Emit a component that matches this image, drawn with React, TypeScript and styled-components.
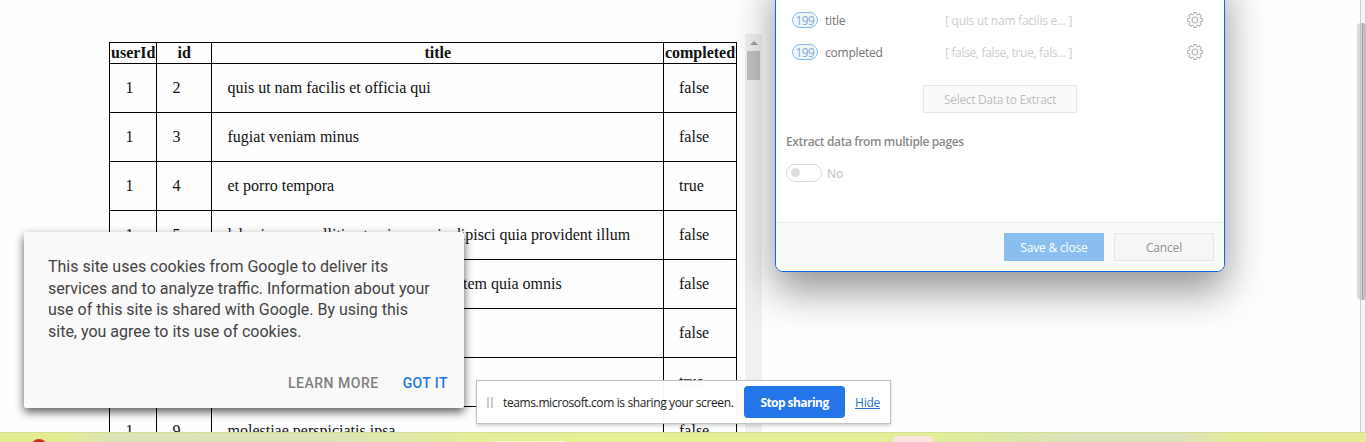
import React from 'react';
import styled, { createGlobalStyle } from 'styled-components';

const Global = createGlobalStyle`
  * { box-sizing: border-box; }
  body { margin: 0; background: #fefefe; overflow: hidden; }
`;

const ui = `'Open Sans', 'Noto Sans', sans-serif`;

const Page = styled.div`
  position: relative;
  width: 1366px;
  height: 442px;
  display: flex;
  flex-direction: column;
  overflow: hidden;
`;

const Content = styled.main`
  height: 432px;
  display: flex;
  overflow: hidden;
`;

const Table = styled.div`
  margin: 42px 8px 0 109px;
  width: 628px;
  flex: none;
  border-right: 1px solid #000;
  font: 16px 'Liberation Serif', serif;
  color: #111;
`;

const Row = styled.div<{ $head?: boolean }>`
  display: grid;
  grid-template-columns: 47px 55px 452px 73px;
  height: ${(p) => (p.$head ? 21 : 49)}px;
  font-weight: ${(p) => (p.$head ? 700 : 400)};
`;

const Cell = styled.div<{ $head?: boolean }>`
  display: flex;
  align-items: center;
  justify-content: ${(p) => (p.$head ? 'center' : 'flex-start')};
  padding-left: ${(p) => (p.$head ? 0.5 : 15.5)}px;
  border: solid #000;
  border-width: 1px 0 0 1px;
  white-space: nowrap;

  &:last-child {
    padding-left: ${(p) => (p.$head ? 0 : 15)}px;
  }
`;

const TableScroll = styled.div`
  margin-top: 34px;
  width: 17px;
  flex: none;
  background: #f0f0f0;
  display: flex;
  flex-direction: column;
  align-items: center;
  padding-top: 7px;
`;

const TableThumb = styled.div`
  margin-top: 6px;
  width: 13px;
  height: 29px;
  background: #c1c1c1;
`;

const PageScroll = styled.div`
  position: relative;
  margin-left: auto;
  width: 6px;
  background: #f5f5f5;
  border: solid #d0d0d0;
  border-width: 0 1px;
`;

const PageThumb = styled.div`
  position: absolute;
  top: 23px;
  left: -4px;
  width: 9px;
  height: 277px;
  border-radius: 4px;
  background: linear-gradient(90deg, #dbdbdb 0 3px, #c6c6c6 3px 4px, #d2d2d2 4px 5px, #a6a6a6 5px 6px, #c0c0c0 6px);
`;

const Dialog = styled.section`
  position: absolute;
  left: 775px;
  top: -30px;
  width: 450px;
  height: 302px;
  border: 1px solid #0a6cd8;
  border-radius: 8px;
  background: #fff;
  box-shadow: 0 18px 42px rgba(0, 0, 0, 0.43);
  font: 12px ${ui};
  display: flex;
  flex-direction: column;
  overflow: hidden;
`;

const DialogBody = styled.div`
  flex: 1;
  padding: 33px 21px 0 10px;
`;

const Field = styled.div`
  display: flex;
  align-items: center;
  height: 32px;
  padding-left: 6px;
`;

const Count = styled.span`
  width: 26px;
  height: 16px;
  border: 1px solid #83b9ea;
  border-radius: 8px;
  background: #f0f6fc;
  color: #85a9d0;
  display: flex;
  align-items: center;
  justify-content: center;
  font-size: 12px;
  letter-spacing: -0.6px;
`;

const FieldName = styled.span`
  margin-left: 7px;
  width: 120px;
  color: #757575;
  padding-top: 1px;
  letter-spacing: -0.2px;
`;

const Preview = styled.span<{ $spacing: number }>`
  color: #cdcdcd;
  padding-top: 1px;
  white-space: pre;
  letter-spacing: ${(p) => p.$spacing}px;
`;

const GearIcon = styled.svg`
  margin-left: auto;
  width: 16px;
  height: 16px;
`;

const Button = styled.div<{ $kind: 'select' | 'save' | 'cancel' }>`
  display: flex;
  align-items: center;
  justify-content: center;
  height: 28px;
  width: ${(p) => (p.$kind === 'select' ? 154 : 100)}px;
  border: 1px solid ${(p) => (p.$kind === 'save' ? '#8abeee' : '#e6e6e6')};
  background: ${(p) => ({ select: '#fafafa', save: '#8abeee', cancel: '#f6f6f6' })[p.$kind]};
  color: ${(p) => ({ select: '#bdbdbd', save: '#fff', cancel: '#8f8f8f' })[p.$kind]};
  margin: ${(p) => (p.$kind === 'select' ? '17px 0 0 137px' : '0')};
  padding-top: 1px;
  letter-spacing: ${(p) => (p.$kind === 'select' ? -0.33 : -0.18)}px;
`;

const Subhead = styled.div`
  margin-top: 21px;
  line-height: 16px;
  font-weight: 600;
  color: #8a8a8a;
  letter-spacing: -0.38px;
`;

const ToggleRow = styled.div`
  display: flex;
  align-items: center;
  gap: 5px;
  margin-top: 14px;
  height: 18px;
  color: #bdbdbd;
`;

const Toggle = styled.div`
  width: 36px;
  height: 18px;
  border: 1px solid #dadada;
  border-radius: 9px;
  padding: 3px 4px;

  &::before {
    content: '';
    display: block;
    width: 9px;
    height: 9px;
    border-radius: 50%;
    background: #dcdedd;
  }
`;

const DialogFooter = styled.div`
  height: 49px;
  border-top: 1px solid #eee;
  background: #fafafa;
  display: flex;
  justify-content: flex-end;
  gap: 10px;
  padding: 10px 10px 0 0;
`;

const CookieCard = styled.section`
  position: absolute;
  left: 24px;
  top: 232px;
  width: 440px;
  height: 176px;
  border-radius: 2px;
  background: #fafafa;
  box-shadow: 0 4px 10px rgba(0, 0, 0, 0.65);
  font-family: Roboto, sans-serif;
  padding: 24px 16px 0 24px;
  display: flex;
  flex-direction: column;
`;

const CookieText = styled.p`
  margin: 0;
  font-size: 16px;
  line-height: 21.67px;
  color: #444;
  white-space: nowrap;
`;

const CookieActions = styled.div`
  display: flex;
  justify-content: flex-end;
  gap: 24px;
  margin-top: 32px;
  font-size: 14px;
  line-height: 16px;
  font-weight: 500;
`;

const CookieAction = styled.span<{ $primary?: boolean }>`
  color: ${(p) => (p.$primary ? '#1a78dc' : '#808080')};
  letter-spacing: ${(p) => (p.$primary ? 0.42 : 0.5)}px;
`;

const ShareBar = styled.section`
  position: absolute;
  left: 476px;
  top: 380px;
  width: 415px;
  height: 44px;
  border: 1px solid #bfc2c2;
  background: rgba(255, 255, 255, 0.96);
  box-shadow: 0 2px 3px rgba(0, 0, 0, 0.16);
  display: flex;
  align-items: center;
  font: 12px ${ui};
  color: #222;
  white-space: nowrap;
`;

const Grip = styled.div`
  width: 6px;
  height: 11px;
  margin: 0 10px;
  border: solid #ccc;
  border-width: 0 2px;
`;

const ShareText = styled.span`
  width: 241px;
  letter-spacing: -0.38px;
`;

const StopButton = styled.div`
  width: 101px;
  height: 32px;
  border-radius: 4px;
  background: #2476e8;
  color: #fff;
  font-weight: 700;
  letter-spacing: -0.55px;
  display: flex;
  align-items: center;
  justify-content: center;
`;

const HideLink = styled.a`
  margin-left: 10px;
  color: #2a70dc;
  text-decoration: underline;
  letter-spacing: -0.2px;
`;

const Taskbar = styled.footer`
  position: relative;
  height: 10px;
  overflow: hidden;
  border-top: 1px solid #d6de95;
  background: linear-gradient(90deg, #e4ec90 0, #e4ec92 60px, #dce3b8 115px, #dce4b6 330px, #e4ee98 480px, #e6f096 600px, #e4ee98 930px, #dae8a8 1010px, #dce2bc 1090px, #dde2ba 1180px, #e5ec96 1240px, #e7ea94);
`;

const TaskItem = styled.div<{ $x: number; $y: number; $w: number; $color: string; $round: string }>`
  position: absolute;
  left: ${(p) => p.$x}px;
  top: ${(p) => p.$y}px;
  width: ${(p) => p.$w}px;
  height: 16px;
  border-radius: ${(p) => p.$round};
  background: ${(p) => p.$color};
`;

const rows: [number, string, string][] = [
  [2, 'quis ut nam facilis et officia qui', 'false'],
  [3, 'fugiat veniam minus', 'false'],
  [4, 'et porro tempora', 'true'],
  [5, 'laboriosam mollitia et enim quasi adipisci quia provident illum', 'false'],
  [6, 'qui ullam ratione quibusdam voluptatem quia omnis', 'false'],
  [7, 'illo expedita consequatur quia in', 'false'],
  [8, 'quo adipisci enim quam ut ab', 'true'],
  [9, 'molestiae perspiciatis ipsa', 'false'],
];

const gearPath = (() => {
  const pts: string[] = [];
  for (let i = 0; i < 8; i++) {
    const a = (i * Math.PI) / 4;
    ([[-0.27, 5.9], [-0.2, 7.5], [0.2, 7.5], [0.27, 5.9]] as const).forEach(([d, r]) =>
      pts.push(`${(8 + r * Math.sin(a + d)).toFixed(2)} ${(8 - r * Math.cos(a + d)).toFixed(2)}`),
    );
  }
  return `M${pts.join('L')}Z`;
})();

const Gear = () => (
  <GearIcon viewBox="0 0 16 16" fill="none" stroke="#b9bdc2" strokeWidth="1.2" strokeLinejoin="round">
    <path d={gearPath} />
    <circle cx="8" cy="8" r="2.8" />
  </GearIcon>
);

export default function App() {
  return (
    <Page>
      <Global />
      <Content>
        <Table>
          <Row $head>
            {['userId', 'id', 'title', 'completed'].map((h) => (
              <Cell $head key={h}>{h}</Cell>
            ))}
          </Row>
          {rows.map(([id, title, done]) => (
            <Row key={id}>
              <Cell>1</Cell>
              <Cell>{id}</Cell>
              <Cell>{title}</Cell>
              <Cell>{done}</Cell>
            </Row>
          ))}
        </Table>
        <TableScroll>
          <svg width="8" height="4" viewBox="0 0 8 4">
            <path d="M4 0L8 4H0Z" fill="#a0a0a0" />
          </svg>
          <TableThumb />
        </TableScroll>
        <PageScroll>
          <PageThumb />
        </PageScroll>
      </Content>
      <Taskbar>
        <TaskItem $x={31} $y={6} $w={16} $color="#cf2a1e" $round="50%" />
        <TaskItem $x={491} $y={8} $w={78} $color="#f6f9d0" $round="4px" />
        <TaskItem $x={893} $y={3} $w={40} $color="#fbe3e2" $round="4px" />
      </Taskbar>
      <Dialog>
        <DialogBody>
          <Field>
            <Count>199</Count>
            <FieldName>title</FieldName>
            <Preview $spacing={-0.25}>[ quis ut nam facilis e... ]</Preview>
            <Gear />
          </Field>
          <Field>
            <Count>199</Count>
            <FieldName>completed</FieldName>
            <Preview $spacing={-0.33}>[ false, false, true, fals... ]</Preview>
            <Gear />
          </Field>
          <Button $kind="select">Select Data to Extract</Button>
          <Subhead>Extract data from multiple pages</Subhead>
          <ToggleRow>
            <Toggle />
            No
          </ToggleRow>
        </DialogBody>
        <DialogFooter>
          <Button $kind="save">Save &amp; close</Button>
          <Button $kind="cancel">Cancel</Button>
        </DialogFooter>
      </Dialog>
      <CookieCard>
        <CookieText>
          This site uses cookies from Google to deliver its<br />
          services and to analyze traffic. Information about your<br />
          use of this site is shared with Google. By using this<br />
          site, you agree to its use of cookies.
        </CookieText>
        <CookieActions>
          <CookieAction>LEARN MORE</CookieAction>
          <CookieAction $primary>GOT IT</CookieAction>
        </CookieActions>
      </CookieCard>
      <ShareBar>
        <Grip />
        <ShareText>teams.microsoft.com is sharing your screen.</ShareText>
        <StopButton>Stop sharing</StopButton>
        <HideLink>Hide</HideLink>
      </ShareBar>
    </Page>
  );
}
